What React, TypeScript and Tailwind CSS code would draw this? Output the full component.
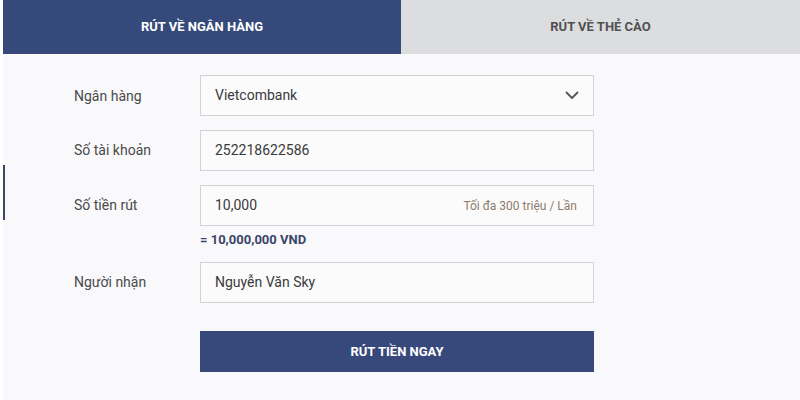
import React from "react";

const labelCls = "text-[14px] text-[#4a4a4a] leading-none";
const boxCls =
  "h-[41px] w-[394px] border border-[#d2d3d6] bg-[#fbfbfc] flex items-center px-[14px] text-[14px] text-[#3a3a3a]";

function Chevron() {
  return (
    <svg width="14" height="9" viewBox="0 0 14 9" fill="none">
      <path d="M1.5 1.5 L7 7 L12.5 1.5" stroke="#555" strokeWidth="1.8" strokeLinecap="round" strokeLinejoin="round" />
    </svg>
  );
}

export default function App() {
  return (
    <div
      className="relative w-[800px] h-[400px] bg-white pl-[3px] overflow-hidden"
      style={{ fontFamily: "Roboto, 'Noto Sans', sans-serif" }}
    >
      {/* side marker */}
      <div className="absolute left-[3px] top-[165px] w-[2px] h-[55px] bg-[#3b4568]" />

      <div className="h-full bg-[#f9f9fb] flex flex-col">
        {/* Tabs */}
        <div className="grid grid-cols-[398px_1fr] h-[54px] shrink-0">
          <div className="bg-[#36497b] flex items-center justify-center text-white text-[13px] font-bold">
            RÚT VỀ NGÂN HÀNG
          </div>
          <div className="bg-[#dcdddf] flex items-center justify-center text-[#505050] text-[13px] font-bold">
            RÚT VỀ THẺ CÀO
          </div>
        </div>

        {/* Form */}
        <div className="pt-[21px] pl-[71px] flex flex-col">
          <div className="flex items-center">
            <div className={`w-[126px] ${labelCls}`}>Ngân hàng</div>
            <div className={`${boxCls} justify-between pr-[14px]`}>
              <span>Vietcombank</span>
              <Chevron />
            </div>
          </div>

          <div className="flex items-center mt-[14px]">
            <div className={`w-[126px] ${labelCls} -mt-[2px]`}>Số tài khoản</div>
            <div className={boxCls}>252218622586</div>
          </div>

          <div className="flex items-center mt-[14px]">
            <div className={`w-[126px] ${labelCls} -mt-[2px]`}>Số tiền rút</div>
            <div className={`${boxCls} justify-between pr-[16px]`}>
              <span>10,000</span>
              <span className="text-[12px] text-[#8c7b6c]">Tối đa 300 triệu / Lần</span>
            </div>
          </div>

          <div className="ml-[126px] mt-[6px] text-[13px] font-bold text-[#3b4568] leading-[16px]">
            = 10,000,000 VND
          </div>

          <div className="flex items-center mt-[14px]">
            <div className={`w-[126px] ${labelCls} -mt-[2px]`}>Người nhận</div>
            <div className={boxCls}>Nguyễn Văn Sky</div>
          </div>

          <div className="ml-[126px] mt-[28px] w-[394px] h-[41px] bg-[#37497b] flex items-center justify-center text-white text-[13px] font-bold">
            RÚT TIỀN NGAY
          </div>
        </div>
      </div>
    </div>
  );
}
